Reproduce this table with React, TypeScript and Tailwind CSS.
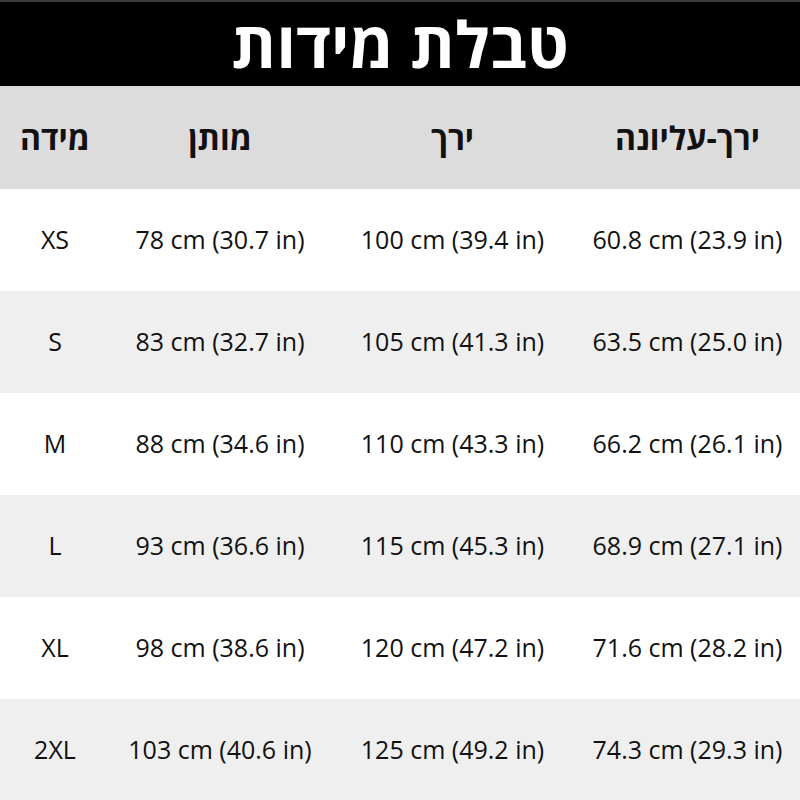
import React from 'react';

const rows = [
  ['XS', '78 cm (30.7 in)', '100 cm (39.4 in)', '60.8 cm (23.9 in)'],
  ['S', '83 cm (32.7 in)', '105 cm (41.3 in)', '63.5 cm (25.0 in)'],
  ['M', '88 cm (34.6 in)', '110 cm (43.3 in)', '66.2 cm (26.1 in)'],
  ['L', '93 cm (36.6 in)', '115 cm (45.3 in)', '68.9 cm (27.1 in)'],
  ['XL', '98 cm (38.6 in)', '120 cm (47.2 in)', '71.6 cm (28.2 in)'],
  ['2XL', '103 cm (40.6 in)', '125 cm (49.2 in)', '74.3 cm (29.3 in)'],
];

const cols = 'grid grid-cols-[110px_220px_245px_225px]';

export default function App() {
  return (
    <div className="w-[800px] h-[800px] bg-white font-['Open_Sans','DejaVu_Sans',sans-serif] text-[#111]">
      <div className="h-[86px] bg-black border-t-2 border-[#3a3a3a] flex items-center justify-center">
        <h1 dir="rtl" className="text-white text-[64px] font-bold leading-[80px]">טבלת מידות</h1>
      </div>
      <div className={`${cols} h-[103px] bg-[#dcdcdc] items-center text-center text-[32px] font-bold`}>
        <div>מידה</div>
        <div>מותן</div>
        <div>ירך</div>
        <div>ירך-עליונה</div>
      </div>
      {rows.map((r, i) => (
        <div
          key={r[0]}
          className={`${cols} h-[102px] items-center text-center text-[25px] font-medium ${i % 2 ? 'bg-[#efefef]' : 'bg-white'}`}
        >
          {r.map((c, j) => (
            <div key={j}>{c}</div>
          ))}
        </div>
      ))}
    </div>
  );
}
